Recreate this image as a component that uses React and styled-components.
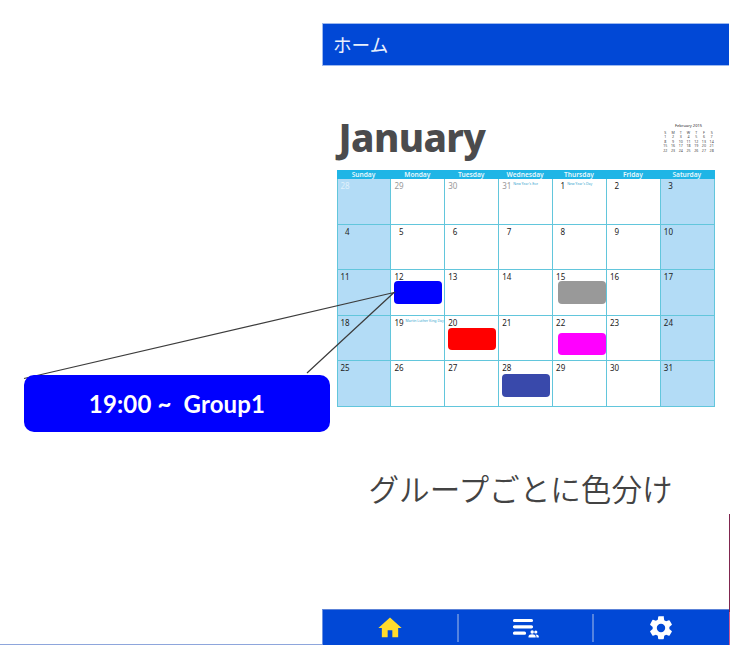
import React from 'react';
import styled, { createGlobalStyle } from 'styled-components';

const GlobalStyle = createGlobalStyle`
  * { box-sizing: border-box; }
  body { margin: 0; background: #fff; overflow: hidden; }
`;

const Page = styled.main`
  position: relative;
  width: 730px;
  height: 645px;
  display: grid;
  grid-template-columns: 322px 407px 1px;
  overflow: hidden;
  font-family: "Noto Sans", "Noto Sans CJK JP", sans-serif;
`;

const Outside = styled.div`
  border-bottom: 1px solid #8ea6dc;
`;

const Phone = styled.section`
  display: flex;
  flex-direction: column;
  padding-top: 23px;
`;

const Edge = styled.div`
  align-self: end;
  height: 131px;
  background: linear-gradient(#80264f 0 98px, #d0588e 98px);
`;

const TopBar = styled.header`
  height: 43px;
  flex: none;
  padding-left: 10px;
  background: #0148d6;
  border: 1px solid #9db9ef;
  border-width: 1px 0 1px 1px;
  color: #eaf0fc;
  font: 400 18.6px/39px "Noto Sans CJK JP", sans-serif;
`;

const Calendar = styled.section`
  width: 378px;
  margin: 48px 0 0 14.5px;
`;

const CalendarHead = styled.div`
  display: flex;
  justify-content: space-between;
  height: 56px;
`;

const Month = styled.h1`
  margin: -2px 0 0 2px;
  color: #4b4b4d;
  font-size: 38.5px;
  line-height: 50px;
  font-weight: 800;
  letter-spacing: -0.6px;
`;

const Mini = styled.div`
  width: 54px;
  margin: 10px -1px 0 0;
  color: #444;
  font-size: 3.6px;
  line-height: 4.5px;
  text-align: center;
`;

const MiniTitle = styled.div`
  margin-bottom: 2px;
  font-size: 4px;
  color: #222;
`;

const MiniGrid = styled.div`
  display: grid;
  grid-template-columns: repeat(7, 1fr);
`;

const Weekdays = styled.div`
  display: grid;
  grid-template-columns: repeat(7, 53.9px);
  height: 9px;
  background: #1fb5e6;
  color: #e9f8fd;
  font-size: 6.6px;
  line-height: 9px;
  font-weight: 600;
  text-align: center;
`;

const Days = styled.div`
  display: grid;
  grid-template-columns: repeat(7, 53.9px);
  grid-auto-rows: 45.5px;
  border-left: 1px solid #62c6dc;
`;

const Day = styled.div`
  padding: 1px 0 0 ${p => (p.$single ? 7.5 : 3)}px;
  border-right: 1px solid #62c6dc;
  border-bottom: 1px solid #62c6dc;
  background: ${p => (p.$weekend ? '#b3dcf6' : '#fff')};
`;

const DayTop = styled.div`
  display: flex;
  gap: 2px;
  height: 10px;
  color: ${p => p.$color};
  font-size: 8px;
  line-height: 11px;
`;

const Holiday = styled.span`
  color: #35a6cf;
  font-size: 3.5px;
  line-height: 7px;
  white-space: nowrap;
`;

const Event = styled.div`
  width: 47.5px;
  height: 22.5px;
  margin: ${p => p.$top}px 0 0 ${p => p.$left}px;
  border-radius: 4px;
  background: ${p => p.$color};
`;

const Caption = styled.p`
  margin: 59px 0 0 46.5px;
  color: #434343;
  font: 350 30.6px/44px "Noto Sans CJK JP DemiLight", "Noto Sans CJK JP", sans-serif;
  white-space: nowrap;
`;

const Nav = styled.nav`
  display: grid;
  grid-template-columns: 135.5px 135.5px 1fr;
  height: 36px;
  margin-top: auto;
  background: #0148d6;
  border-top: 1px solid #5c83d8;
  border-left: 1px solid #6d93e2;
`;

const NavItem = styled.button`
  display: flex;
  justify-content: center;
  height: 28px;
  margin: 4px 0 0;
  padding: 0 ${p => (p.$last ? 2 : 0)}px 0 0;
  background: none;
  border: 0;
  border-right: ${p => (p.$last ? '0' : '2px')} solid #5583df;
`;

const Callout = styled.div`
  position: absolute;
  left: 24px;
  top: 375px;
  width: 306px;
  height: 57px;
  border-radius: 10px;
  background: #00f;
  color: #fff;
  text-align: center;
  font: 700 24px/57px Lato, sans-serif;
  letter-spacing: 0.15px;
  white-space: pre;
`;

const Pointer = styled.svg`
  position: absolute;
  left: 0;
  top: 280px;
  stroke: #3c3c3c;
  stroke-width: 1.2;
`;

const WEEKDAYS = ['Sunday', 'Monday', 'Tuesday', 'Wednesday', 'Thursday', 'Friday', 'Saturday'];
const DATES = [28, 29, 30, 31, ...Array.from({ length: 31 }, (_, i) => i + 1)];
const HOLIDAYS = { 3: "New Year's Eve", 4: "New Year's Day", 22: 'Martin Luther King Day' };
const EVENTS = {
  12: { $color: '#00f', $top: 0, $left: 0 },
  15: { $color: '#999', $top: 0, $left: 2 },
  20: { $color: '#f00', $top: 1, $left: 0 },
  22: { $color: '#f0f', $top: 6, $left: 2 },
  28: { $color: '#3949ab', $top: 2, $left: 0 },
};

function dateColor(i) {
  if (i === 0) return '#e0f1fb';
  return i < 4 ? '#999' : '#222';
}

function App() {
  return (
    <>
      <GlobalStyle />
      <Page>
        <Outside />
        <Phone>
          <TopBar>ホーム</TopBar>
          <Calendar>
            <CalendarHead>
              <Month>January</Month>
              <Mini>
                <MiniTitle>February 2015</MiniTitle>
                <MiniGrid>
                  {[...'SMTWTFS'].map((d, i) => <span key={i}>{d}</span>)}
                  {Array.from({ length: 28 }, (_, i) => <span key={i + 7}>{i + 1}</span>)}
                </MiniGrid>
              </Mini>
            </CalendarHead>
            <Weekdays>{WEEKDAYS.map(d => <span key={d}>{d}</span>)}</Weekdays>
            <Days>
              {DATES.map((date, i) => (
                <Day key={i} $weekend={i % 7 === 0 || i % 7 === 6} $single={date < 10}>
                  <DayTop $color={dateColor(i)}>
                    {date}
                    {HOLIDAYS[i] && <Holiday>{HOLIDAYS[i]}</Holiday>}
                  </DayTop>
                  {i > 3 && EVENTS[date] && <Event {...EVENTS[date]} />}
                </Day>
              ))}
            </Days>
          </Calendar>
          <Caption>グループごとに色分け</Caption>
          <Nav>
            <NavItem aria-label="Home">
              <svg width="28" height="28" viewBox="0 0 24 24" fill="#ffdb2d">
                <path d="M10 20v-6h4v6h5v-8h3L12 3 2 12h3v8z" />
              </svg>
            </NavItem>
            <NavItem aria-label="Groups">
              <svg width="28" height="28" viewBox="0 0 28 28" fill="#fff">
                <path d="M3.5 6.5h17M3.5 12.8h17M3.5 19.2h10" stroke="#fff" strokeWidth="3.2" strokeLinecap="round" />
                <circle cx="21.2" cy="18" r="1.7" />
                <circle cx="24.8" cy="18" r="1.6" />
                <path d="M17.5 23.4v-.9c0-3 7.2-3 7.2 0v.9zM25.4 23.4v-1.5l-.8-1.4c1.6-.1 3.2.6 3.2 2v.9z" />
              </svg>
            </NavItem>
            <NavItem $last aria-label="Settings">
              <svg width="28" height="28" viewBox="0 0 24 24" fill="#fff">
                <path d="M19.14 12.94c.04-.3.06-.61.06-.94s-.02-.64-.07-.94l2.03-1.58a.49.49 0 0 0 .12-.61l-1.92-3.32a.49.49 0 0 0-.59-.22l-2.39.96a7 7 0 0 0-1.62-.94l-.36-2.54A.48.48 0 0 0 13.92 2h-3.84a.48.48 0 0 0-.48.41l-.36 2.54a7 7 0 0 0-1.62.94l-2.39-.96a.49.49 0 0 0-.59.22L2.72 8.87a.49.49 0 0 0 .12.61l2.03 1.58a7 7 0 0 0 0 1.88l-2.03 1.58a.49.49 0 0 0-.12.61l1.92 3.32c.12.22.37.29.59.22l2.39-.96c.5.38 1.03.7 1.62.94l.36 2.54c.05.24.24.41.48.41h3.84c.24 0 .44-.17.47-.41l.36-2.54a7 7 0 0 0 1.62-.94l2.39.96c.22.08.47 0 .59-.22l1.92-3.32a.49.49 0 0 0-.12-.61zM12 15.6a3.6 3.6 0 1 1 0-7.2 3.6 3.6 0 0 1 0 7.2z" />
              </svg>
            </NavItem>
          </Nav>
        </Phone>
        <Edge />
        <Pointer width="400" height="102">
          <path d="M24 98.5 394 12.5 307 93" fill="none" />
        </Pointer>
        <Callout>19:00 ~  Group1</Callout>
      </Page>
    </>
  );
}

export default App;
